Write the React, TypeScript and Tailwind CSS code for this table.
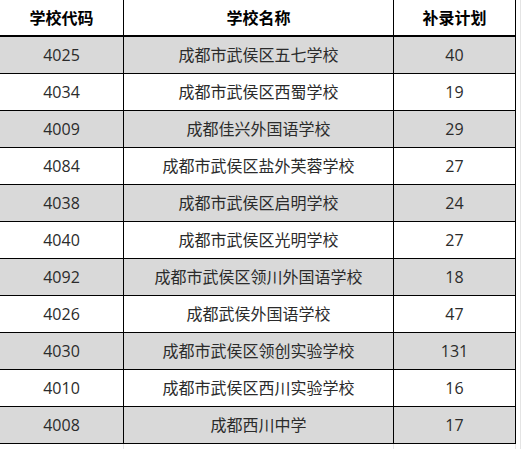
const rows: [string, string, string][] = [
  ["4025", "成都市武侯区五七学校", "40"],
  ["4034", "成都市武侯区西蜀学校", "19"],
  ["4009", "成都佳兴外国语学校", "29"],
  ["4084", "成都市武侯区盐外芙蓉学校", "27"],
  ["4038", "成都市武侯区启明学校", "24"],
  ["4040", "成都市武侯区光明学校", "27"],
  ["4092", "成都市武侯区领川外国语学校", "18"],
  ["4026", "成都武侯外国语学校", "47"],
  ["4030", "成都市武侯区领创实验学校", "131"],
  ["4010", "成都市武侯区西川实验学校", "16"],
  ["4008", "成都西川中学", "17"],
];

const font = { fontFamily: '"Open Sans", "Noto Sans CJK SC", sans-serif' };

export default function App() {
  return (
    <div className="w-[521px] h-[449px] bg-white flex overflow-hidden" style={font}>
      <div className="w-[516px] flex flex-col">
        <div className="flex h-[37px] border-b-2 border-black text-[16px] font-bold text-black">
          <div className="w-[124px] border-r border-black flex items-center justify-center">学校代码</div>
          <div className="w-[270px] border-r border-black flex items-center justify-center">学校名称</div>
          <div className="w-[122px] border-r border-black flex items-center justify-center">补录计划</div>
        </div>
        {rows.map(([code, name, plan], i) => (
          <div
            key={code}
            className={`flex h-[37px] border-b border-black text-[16px] text-[#2b2b2b] ${
              i % 2 === 0 ? "bg-[#d9d9d9]" : "bg-white"
            }`}
          >
            <div className="w-[124px] border-r border-black flex items-center justify-center">{code}</div>
            <div className="w-[270px] border-r border-black flex items-center justify-center">{name}</div>
            <div className="w-[122px] border-r border-black flex items-center justify-center">{plan}</div>
          </div>
        ))}
        <div className="flex h-[5px]">
          <div className="w-[124px] border-r border-[#e4e4e4]" />
          <div className="w-[270px] border-r border-[#e4e4e4]" />
          <div className="w-[122px] border-r border-[#e4e4e4]" />
        </div>
      </div>
      <div className="w-[5px] border-r border-[#e4e4e4]" />
    </div>
  );
}
